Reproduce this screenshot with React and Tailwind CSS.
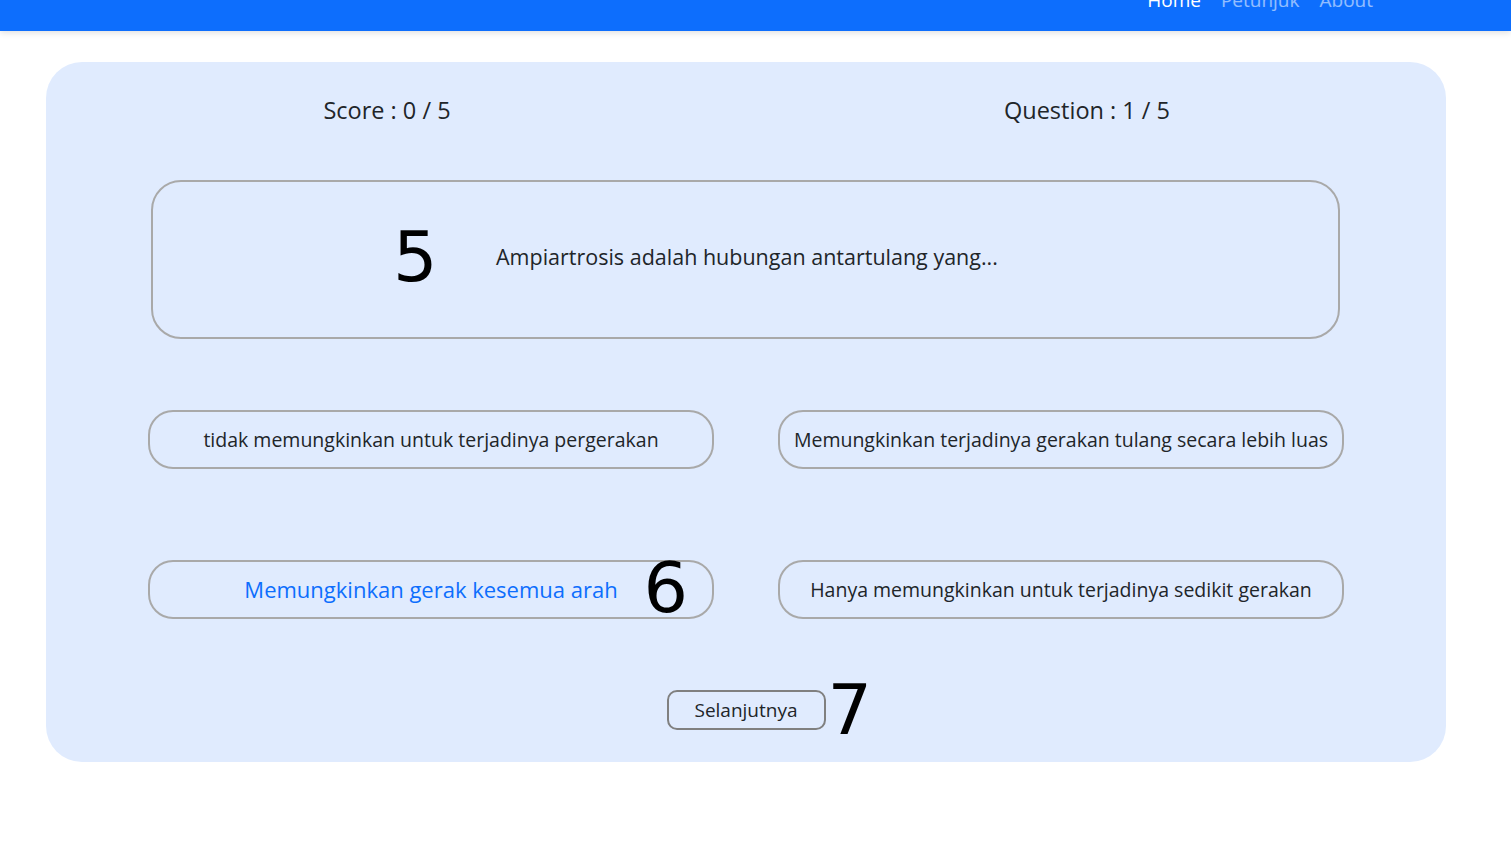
import React from "react";

const font = { fontFamily: "'Open Sans', 'Noto Sans', sans-serif" };
const markFont = { fontFamily: "'DejaVu Sans', sans-serif" };

const Option = ({ text, active, mark }) => {
  return (
    <div className="relative w-[566px] h-[59px] rounded-[25px] border-2 border-[#a9a9a9] flex items-center justify-center">
      <span className={active ? "text-[22px] text-[#0d6efd]" : "text-[19.5px] text-[#212529]"}>{text}</span>
      {mark && (
        <span className="absolute right-[24px] top-[-9px] text-[70px] leading-none text-black" style={markFont}>
          {mark}
        </span>
      )}
    </div>
  );
};

export default function App() {
  return (
    <div className="min-h-[859px] bg-white" style={font}>
      <nav className="h-[31px] bg-[#0d6efd] shadow-[0_2px_6px_rgba(0,0,0,0.12)] relative overflow-hidden">
        <div className="absolute right-[138px] top-[-14px] flex gap-[20px] text-[19px]">
          <span className="text-white">Home</span>
          <span className="text-white/55">Petunjuk</span>
          <span className="text-white/55">About</span>
        </div>
      </nav>

      <div className="px-[46px] pt-[31px]">
        <div className="w-[1400px] h-[700px] bg-[#e0ebfe] rounded-[36px] flex flex-col">
          <div className="flex pt-[31px] text-[23.5px] text-[#212529]">
            <div className="w-[682px] text-center">Score : 0 / 5</div>
            <div className="w-[718px] text-center">Question : 1 / 5</div>
          </div>

          <div className="ml-[105px] mt-[52px] w-[1189px] h-[159px] rounded-[30px] border-2 border-[#a9a9a9] flex items-center">
            <span className="ml-[240px] mt-[-6px] w-[103px] text-[70px] leading-none text-black" style={markFont}>5</span>
            <span className="mt-[-6px] text-[21.5px] text-[#212529]">Ampiartrosis adalah hubungan antartulang yang...</span>
          </div>

          <div className="ml-[102px] mt-[71px] grid grid-cols-[566px_566px] gap-x-[64px] gap-y-[91px]">
            <Option text="tidak memungkinkan untuk terjadinya pergerakan" />
            <Option text="Memungkinkan terjadinya gerakan tulang secara lebih luas" />
            <Option text="Memungkinkan gerak kesemua arah" active mark="6" />
            <Option text="Hanya memungkinkan untuk terjadinya sedikit gerakan" />
          </div>

          <div className="mt-[71px] flex justify-center">
            <div className="relative">
              <button className="w-[159px] h-[40px] rounded-[10px] border-2 border-[#808080] text-[19px] text-[#212529]">
                Selanjutnya
              </button>
              <span className="absolute left-[161px] top-[-15px] text-[70px] leading-none text-black" style={markFont}>7</span>
            </div>
          </div>
        </div>
      </div>
    </div>
  );
}
